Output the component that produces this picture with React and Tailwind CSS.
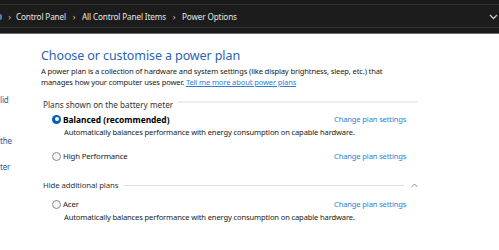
const plans = [
  { name: "Balanced (recommended)", checked: true, desc: "Automatically balances performance with energy consumption on capable hardware." },
  { name: "High Performance", checked: false },
];

const Radio = ({ checked }) =>
  checked ? (
    <span className="w-[9px] h-[9px] rounded-full bg-[#005fb8] flex items-center justify-center shrink-0">
      <span className="w-[4px] h-[4px] rounded-full bg-white" />
    </span>
  ) : (
    <span className="w-[9px] h-[9px] rounded-full border border-[#8a8a8a] bg-[#f7f7f7] shrink-0" />
  );

const Chevron = () => <span className="w-[16px] text-center text-[#c4c4c4] text-[9px]">›</span>;

function PlanRow({ plan }) {
  return (
    <div>
      <div className="flex items-center h-[14px] pl-[11px]">
        <Radio checked={plan.checked} />
        <span className={`ml-[2px] w-[271px] ${plan.checked ? "font-bold text-black text-[8.4px] tracking-[0px]" : "text-[#1a1a1a] text-[7.8px]"}`}>{plan.name}</span>
        <span className="text-[#2f7fd6]">Change plan settings</span>
      </div>
      {plan.desc && <p className="pl-[23px] mt-[1px] text-[#1a1a1a]">{plan.desc}</p>}
    </div>
  );
}

export default function App() {
  return (
    <div className="w-[499px] h-[250px] overflow-hidden bg-white font-['Noto_Sans',sans-serif]">
      {/* address bar */}
      <div className="h-[34px] bg-[#1a1a1a] flex flex-col">
        <div className="h-[5px] border-b border-[#303030]" />
        <div className="h-[23px] pt-[2px] bg-[#1c1c1c] flex items-center text-[8.2px] tracking-[-0.15px] text-[#e6e6e6] border-b border-[#333]">
          <span className="w-[2px] h-[6px] bg-[#4a7fc0] rounded-r-sm" />
          <span className="w-[14px] text-right pr-[5px] text-[#c4c4c4] text-[9px]">›</span>
          <span>Control Panel</span>
          <Chevron />
          <span>All Control Panel Items</span>
          <Chevron />
          <span>Power Options</span>
          <svg className="ml-auto mr-[1px]" width="9" height="6" viewBox="0 0 9 6">
            <path d="M1 1l3.5 3.5L8 1" fill="none" stroke="#c8c8c8" strokeWidth="1.3" />
          </svg>
        </div>
        <div className="flex-1 border-b border-[#6b6b6b]" />
      </div>

      <div className="flex text-[7.6px] tracking-[-0.15px] leading-[11px]">
        {/* left pane, clipped */}
        <div className="w-[41px] shrink-0 text-[#2d5a93] text-[8px]">
          <div className="mt-[60px]">lid</div>
          <div className="mt-[30px]">the</div>
          <div className="mt-[15px]">ter</div>
        </div>

        <div className="w-[377px]">
          <h1 className="mt-[14px] text-[12.5px] tracking-[-0.1px] leading-[16px] text-[#2a64b4]">Choose or customise a power plan</h1>
          <p className="mt-[2px] text-[#1a1a1a]">
            A power plan is a collection of hardware and system settings (like display brightness, sleep, etc.) that
            <br />
            manages how your computer uses power. <span className="text-[#2f7fd6] underline">Tell me more about power plans</span>
          </p>

          <div className="mt-[10px] h-[12px] flex items-center pl-[2px] text-[8.2px] tracking-[0px]">
            <span className="text-[#333]">Plans shown on the battery meter</span>
            <span className="ml-[5px] flex-1 h-[2px] bg-[#ececec] -translate-y-[2px]" />
          </div>

          <div className="mt-[2px] flex flex-col gap-[11px]">
            {plans.map((p) => (
              <PlanRow key={p.name} plan={p} />
            ))}
          </div>

          <div className="mt-[16px] h-[12px] flex items-center pl-[2px] text-[7.8px] tracking-[-0.1px]">
            <span className="text-[#333]">Hide additional plans</span>
            <span className="ml-[5px] flex-1 h-px bg-[#dcdcdc]" />
            <svg className="ml-[7px]" width="7" height="5" viewBox="0 0 7 5">
              <path d="M0.5 4l3-3 3 3" fill="none" stroke="#8a8a8a" strokeWidth="1" />
            </svg>
          </div>

          <div className="mt-[6px]">
            <PlanRow plan={{ name: "Acer", checked: false, desc: "Automatically balances performance with energy consumption on capable hardware." }} />
          </div>
        </div>
      </div>
    </div>
  );
}
